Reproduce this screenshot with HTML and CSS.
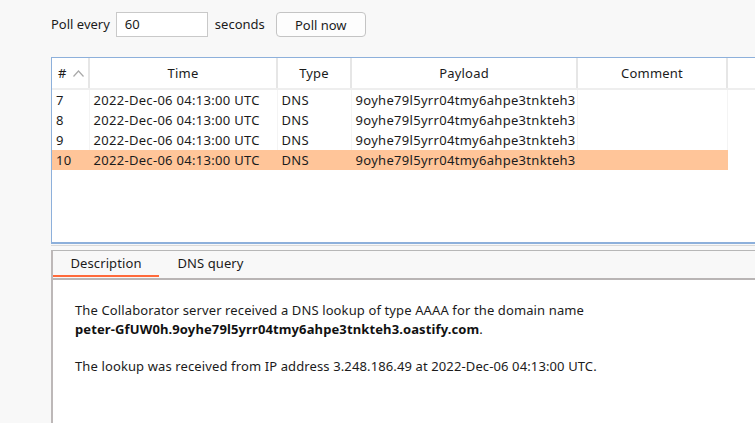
FILE: index.html
```html
<!DOCTYPE html>
<html>
<head>
<meta charset="utf-8">
<link rel="stylesheet" href="styles.css">
</head>
<body>
<div class="toolbar">
  <span class="label">Poll every</span>
  <div class="input">60</div>
  <span class="label seconds">seconds</span>
  <button class="btn">Poll now</button>
</div>

<div class="table-panel">
  <table class="grid">
    <colgroup>
      <col class="c-num"><col class="c-time"><col class="c-type"><col class="c-payload"><col class="c-comment"><col class="c-fill">
    </colgroup>
    <thead>
      <tr>
        <th class="num"><span>#</span><svg class="sort" width="11" height="7" viewBox="0 0 11 7"><path d="M0.5 6.5 L5.5 1 L10.5 6.5" fill="none" stroke="#a9a9a9" stroke-width="1.2"/></svg></th>
        <th>Time</th>
        <th>Type</th>
        <th>Payload</th>
        <th>Comment</th>
        <th class="fill"></th>
      </tr>
    </thead>
    <tbody>
      <tr><td>7</td><td>2022-Dec-06 04:13:00 UTC</td><td>DNS</td><td>9oyhe79l5yrr04tmy6ahpe3tnkteh3</td><td></td><td class="fill"></td></tr>
      <tr><td>8</td><td>2022-Dec-06 04:13:00 UTC</td><td>DNS</td><td>9oyhe79l5yrr04tmy6ahpe3tnkteh3</td><td></td><td class="fill"></td></tr>
      <tr><td>9</td><td>2022-Dec-06 04:13:00 UTC</td><td>DNS</td><td>9oyhe79l5yrr04tmy6ahpe3tnkteh3</td><td></td><td class="fill"></td></tr>
      <tr class="selected"><td>10</td><td>2022-Dec-06 04:13:00 UTC</td><td>DNS</td><td>9oyhe79l5yrr04tmy6ahpe3tnkteh3</td><td></td><td class="fill"></td></tr>
    </tbody>
  </table>
</div>

<div class="splitter"></div>

<div class="detail">
  <div class="tabs">
    <div class="tab active">Description</div>
    <div class="tab">DNS query</div>
  </div>
  <div class="content">
    <p>The Collaborator server received a DNS lookup of type AAAA for the domain name<br><b>peter-GfUW0h.9oyhe79l5yrr04tmy6ahpe3tnkteh3.oastify.com</b>.</p>
    <p>The lookup was received from IP address 3.248.186.49 at 2022-Dec-06 04:13:00 UTC.</p>
  </div>
</div>
</body>
</html>
```

FILE: styles.css
```css
html, body {
  margin: 0;
  padding: 0;
  height: 100%;
  overflow: hidden;
}
body {
  display: flex;
  flex-direction: column;
  background: #f8f8f8;
  font-family: "Noto Sans", "Open Sans", sans-serif;
  font-size: 13px;
  color: #1b1b1b;
}

.toolbar {
  display: flex;
  align-items: center;
  height: 25px;
  padding: 12px 0 0 51px;
  flex: none;
}
.label { line-height: 25px; }
.input {
  box-sizing: border-box;
  width: 92px;
  height: 25px;
  margin-left: 6px;
  padding-left: 8px;
  line-height: 23px;
  background: #fff;
  border: 1px solid #c9c9c9;
}
.seconds { margin-left: 7px; }
.btn {
  box-sizing: border-box;
  width: 90px;
  height: 25px;
  margin-left: 11px;
  padding: 0;
  background: #fdfdfd;
  border: 1px solid #c4c4c4;
  border-radius: 4px;
  font: inherit;
  color: #1b1b1b;
}

.table-panel {
  flex: none;
  box-sizing: border-box;
  height: 187px;
  margin: 20px 0 0 51px;
  background: #fff;
  border-top: 1px solid #8db0db;
  border-left: 1px solid #8db0db;
  border-bottom: 2px solid #8db0db;
  overflow: hidden;
}
.grid {
  border-collapse: collapse;
  table-layout: fixed;
  width: 760px;
}
.c-num { width: 37px; }
.c-time { width: 188px; }
.c-type { width: 74px; }
.c-payload { width: 226px; }
.c-comment { width: 150px; }
.c-fill { width: 85px; }

.grid th {
  height: 30px;
  padding: 0;
  font-weight: normal;
  text-align: center;
  background: #fff;
  border-right: 2px solid #e6e6e6;
  border-bottom: 2px solid #eeeeee;
  white-space: nowrap;
  letter-spacing: 0.2px;
}
.grid th.num {
  text-align: left;
  padding-left: 6px;
}
.grid th.fill, .grid td.fill { border-right: none; }
.sort {
  margin-left: 6px;
  vertical-align: 1px;
}
.grid td {
  height: 20px;
  padding: 0 0 0 4px;
  white-space: nowrap;
  overflow: hidden;
  letter-spacing: 0.3px;
  border-right: 1px solid #f4f4f4;
}
.grid tr.selected td {
  background: #ffc599;
  border-right-color: #ffc599;
}
.grid tr.selected td.fill {
  background: #fff;
}

.splitter {
  flex: none;
  height: 5px;
  margin-left: 51px;
  border-top: 1px solid #d9d9d9;
  box-sizing: border-box;
  margin-top: 1px;
}

.detail {
  flex: 1;
  min-height: 0;
  display: flex;
  flex-direction: column;
  margin-left: 51px;
  border-top: 1px solid #b7b7b7;
  border-left: 2px solid #bdb8b8;
}
.tabs {
  flex: none;
  display: flex;
  height: 27px;
  background: #f8f8f8;
  border-bottom: 2px solid #b9b5b5;
}
.tab {
  box-sizing: border-box;
  height: 26px;
  padding: 0;
  line-height: 25px;
  text-align: center;
  letter-spacing: 0.1px;
}
.tab.active {
  width: 106px;
  border-bottom: 2px solid #ff6a3b;
}
.tab + .tab { width: 103px; }
.content {
  flex: 1;
  min-height: 0;
  background: #fff;
  padding: 21px 0 0 22px;
  line-height: 19px;
  letter-spacing: 0.12px;
}
.content p {
  margin: 0 0 18px 0;
}
.content b {
  font-weight: bold;
  color: #111;
}
```
